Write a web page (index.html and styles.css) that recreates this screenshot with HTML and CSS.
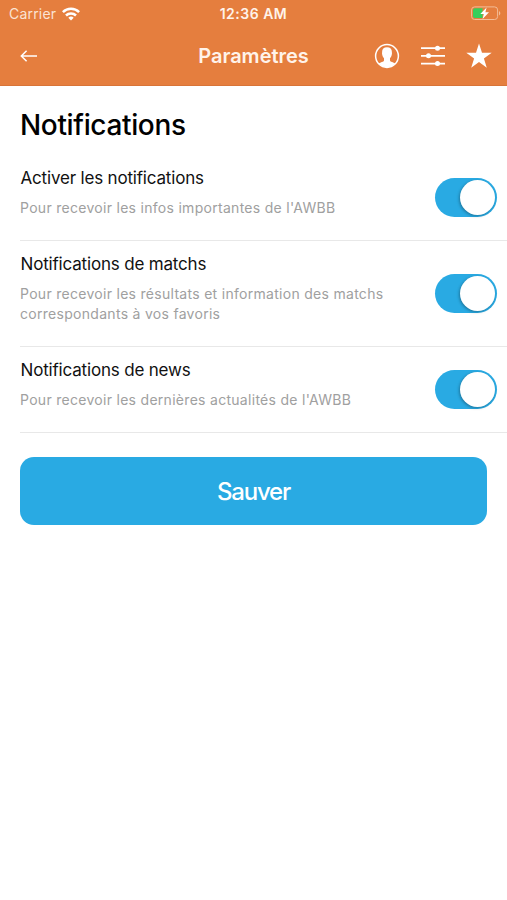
FILE: index.html
```html
<!DOCTYPE html>
<html lang="fr">

<head>
    <meta charset="UTF-8">
    <meta name="viewport" content="width=device-width, initial-scale=1.0">
    <title>Paramètres</title>
    <link rel="stylesheet" href="styles.css">
</head>

<body>
    <header class="header">
        <div class="status">
            <div class="carrier">
                <span class="carrier-name">Carrier</span>
                <svg width="18" height="14" viewBox="0 0 18 14" fill="none" stroke="#fff" stroke-width="2.5">
                    <path d="M.9 5.2a11.500 11.500 0 0 1 16.200 0" />
                    <path d="M4 8.500a7.100 7.100 0 0 1 10 0" />
                    <path d="M9 13.600 6.300 10.800a3.900 3.900 0 0 1 5.400 0z" fill="#fff" stroke="none" />
                </svg>
            </div>
            <span class="time">12:36 AM</span>
            <svg class="battery" width="30" height="15" viewBox="0 0 30 15">
                <rect x=".6" y=".9" width="26" height="12.6" rx="3" fill="none" stroke="#f3bd98" />
                <path d="M28 5c1.800.7 1.800 3.700 0 4.400z" fill="#f3bd98" />
                <path d="M4 2.300h7.500v9.700H4a2 2 0 0 1-2-2V4.300a2 2 0 0 1 2-2z" fill="#35cf5b" />
                <path d="M15.600 1.600 9.300 8h3.500l-1.200 4.900L18 6.300h-3.600z" fill="#fff" />
            </svg>
        </div>
        <div class="navbar">
            <a class="back">
                <svg width="18" height="14" viewBox="0 0 18 14" fill="none" stroke="#fff" stroke-width="1.5">
                    <path d="M17 7H1.400M6.600 1.700 1.300 7l5.300 5.300" />
                </svg>
            </a>
            <h2 class="navbar-title">Paramètres</h2>
            <div class="actions">
                <svg width="26" height="26" viewBox="0 0 26 26">
                    <circle cx="13" cy="13" r="11.4" fill="none" stroke="#fff" stroke-width="1.5" />
                    <path d="M13 4.300c-3.400 0-5 2.100-4.900 4.900 0 .9-.2 1.300.1 2.200.3 1.900 1 2.800 1.800 3.800v2.300c-.3 1.500-3.300 1.500-5.200 3.100a11 11 0 0 0 16.400 0c-1.900-1.600-4.900-1.600-5.200-3.100v-2.300c.8-1 1.500-1.900 1.800-3.800.3-.9.1-1.300.1-2.200.1-2.800-1.500-4.900-4.900-4.900z" fill="#fff" />
                </svg>
                <svg width="24" height="24" viewBox="0 0 24 24" fill="#fff">
                    <path d="M0 3.300h24v1.700H0zM0 11h24v1.700H0zM0 18.700h24v1.700H0z" />
                    <circle cx="16.5" cy="4.2" r="2.5" />
                    <circle cx="7.5" cy="11.8" r="2.5" />
                    <circle cx="16.5" cy="19.5" r="2.5" />
                </svg>
                <svg width="26" height="26" viewBox="0 0 26 26">
                    <path d="M13 .5 16 9.700h9.700L17.900 15.500 20.800 24.700 13 19.100 5.200 24.700 8.100 15.500.3 9.700H10z" fill="#fff" />
                </svg>
            </div>
        </div>
    </header>

    <main class="content">
        <h1 class="title">Notifications</h1>
        <ul class="list">
            <li class="item">
                <div class="label">
                    <h3>Activer les notifications</h3>
                    <p>Pour recevoir les infos importantes de l'AWBB</p>
                </div>
                <div class="toggle"><span></span></div>
            </li>
            <li class="item">
                <div class="label">
                    <h3>Notifications de matchs</h3>
                    <p>Pour recevoir les résultats et information des matchs correspondants à vos favoris</p>
                </div>
                <div class="toggle"><span></span></div>
            </li>
            <li class="item">
                <div class="label">
                    <h3>Notifications de news</h3>
                    <p>Pour recevoir les dernières actualités de l'AWBB</p>
                </div>
                <div class="toggle"><span></span></div>
            </li>
        </ul>
        <button class="save">Sauver</button>
    </main>
</body>

</html>
```

FILE: styles.css
```css
* {
    margin: 0;
    padding: 0;
    box-sizing: border-box;
    list-style: none;
}

body {
    background: #fff;
    font-family: Inter, "Liberation Sans", sans-serif;
    color: #111;
}

svg {
    display: block;
}

.header {
    height: 86px;
    background: #e57e3e;
    border-bottom: 1px solid #d87438;
    color: #fff;
}

.status {
    display: grid;
    grid-template-columns: 1fr auto 1fr;
    align-items: center;
    height: 27px;
    padding: 0 6px;
    font-size: 14px;
}

.carrier {
    display: flex;
    align-items: center;
    gap: 6px;
    padding-left: 3px;
}

.carrier-name {
    color: #fbe3d3;
    letter-spacing: 0.2px;
}

.time {
    color: #fff3ea;
    font-weight: 600;
    font-size: 14px;
    letter-spacing: 0.5px;
}

.battery {
    justify-self: end;
}

.navbar {
    display: grid;
    grid-template-columns: 1fr auto 1fr;
    align-items: center;
    height: 58px;
    padding: 0 15px;
}

.back {
    padding-left: 5px;
}

.navbar-title {
    color: #fff3ea;
    font-size: 20px;
    font-weight: 600;
}

.actions {
    display: flex;
    align-items: center;
    justify-content: flex-end;
    gap: 21px;
}

.title {
    padding: 22px 20px 0;
    font-size: 28px;
    font-weight: 500;
    line-height: 35px;
    letter-spacing: -0.35px;
    color: #000;
}

.list {
    margin-top: 12px;
    padding-left: 20px;
}

.item {
    display: flex;
    justify-content: space-between;
    align-items: center;
    padding: 13px 10px 13px 0;
    border-bottom: 1px solid #e8e8e8;
}

.label {
    width: 385px;
    padding-bottom: 9px;
}

.label h3 {
    font-size: 17px;
    font-weight: 400;
    line-height: 20px;
    letter-spacing: -0.18px;
    text-indent: 0.5px;
}

.label p {
    margin-top: 10px;
    font-size: 14px;
    line-height: 20px;
    letter-spacing: 0.29px;
    color: #a0a0a0;
}

.toggle {
    display: flex;
    justify-content: flex-end;
    flex: none;
    width: 62px;
    height: 39px;
    padding: 2px;
    border-radius: 20px;
    background: #29aae3;
}

.toggle span {
    width: 35px;
    height: 35px;
    border-radius: 50%;
    background: #fff;
    box-shadow: -1px 1px 3px rgba(0, 0, 0, 0.3);
}

.save {
    display: block;
    width: 467px;
    height: 68px;
    margin: 24px 20px 0;
    border: 0;
    border-radius: 14px;
    background: #29aae3;
    color: #fff;
    font-family: inherit;
    font-size: 24px;
    font-weight: 500;
    letter-spacing: -1.2px;
}
```
